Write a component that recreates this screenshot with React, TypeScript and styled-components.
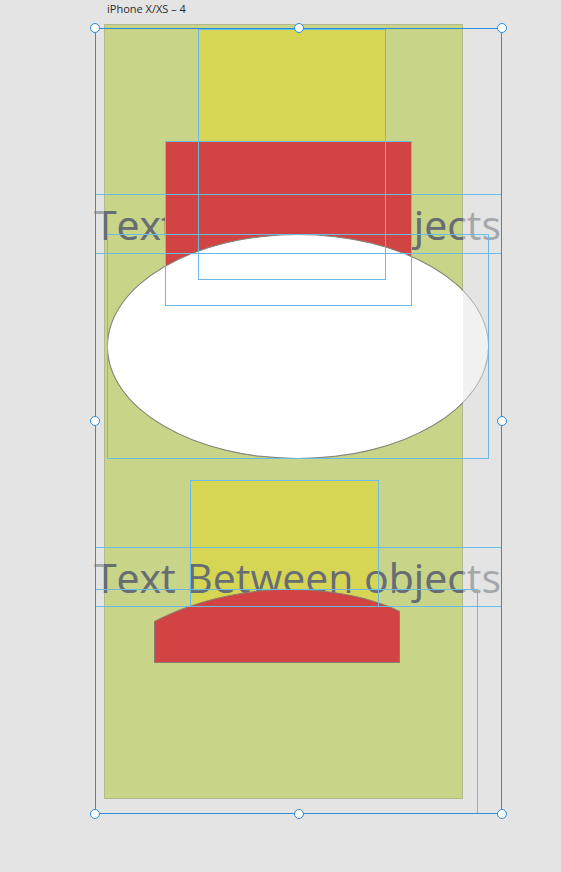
import React, { FC } from 'react';
import styled, { createGlobalStyle } from 'styled-components';

// design canvas: everything here sits at its own coordinates on the board
const ARTBOARD = { x: 104, y: 24, w: 359, h: 775 };

const GlobalStyle = createGlobalStyle`
  html, body {
    margin: 0;
    padding: 0;
    background: #e4e4e4;
  }
  body {
    font-family: 'Open Sans', 'Noto Sans', sans-serif;
  }
`;

const Canvas = styled.div`
  position: relative;
  width: 561px;
  height: 872px;
  overflow: hidden;
  background: #e4e4e4;
`;

const ArtboardTitle = styled.div`
  position: absolute;
  left: 107px;
  top: 1px;
  font-size: 11px;
  line-height: 16px;
  color: #2b2b2b;
`;

const Artboard = styled.div`
  position: absolute;
  left: ${ARTBOARD.x}px;
  top: ${ARTBOARD.y}px;
  width: ${ARTBOARD.w}px;
  height: ${ARTBOARD.h}px;
  box-sizing: border-box;
  background: #c8d487;
  border: 1px solid #b2b98e;
`;

const Layer = styled.div<{ $faded?: boolean }>`
  position: absolute;
  inset: 0;
  opacity: ${({ $faded }) => ($faded ? 0.5 : 1)};
  clip-path: ${({ $faded }) =>
    $faded
      ? 'none'
      : `inset(${ARTBOARD.y}px ${561 - ARTBOARD.x - ARTBOARD.w}px ${872 - ARTBOARD.y - ARTBOARD.h}px ${ARTBOARD.x}px)`};
`;

type Box = { $x: number; $y: number; $w: number; $h: number };

const Rect = styled.div<Box & { $fill: string }>`
  position: absolute;
  left: ${({ $x }) => $x}px;
  top: ${({ $y }) => $y}px;
  width: ${({ $w }) => $w}px;
  height: ${({ $h }) => $h}px;
  box-sizing: border-box;
  background: ${({ $fill }) => $fill};
  border: 1px solid #6c8e9c;
`;

const Oval = styled.div<Box>`
  position: absolute;
  left: ${({ $x }) => $x}px;
  top: ${({ $y }) => $y}px;
  width: ${({ $w }) => $w}px;
  height: ${({ $h }) => $h}px;
  box-sizing: border-box;
  border-radius: 50%;
  background: #ffffff;
  border: 1px solid #7e8478;
`;

const Label = styled.div<{ $x: number; $y: number }>`
  position: absolute;
  left: ${({ $x }) => $x}px;
  top: ${({ $y }) => $y}px;
  font-family: 'Open Sans', 'Noto Sans', sans-serif;
  font-size: 41px;
  line-height: 59px;
  color: #686d74;
  white-space: nowrap;
`;

const ArchSvg = styled.svg`
  position: absolute;
  left: 0;
  top: 0;
  width: 561px;
  height: 872px;
`;

const Guide = styled.div<Box>`
  position: absolute;
  left: ${({ $x }) => $x}px;
  top: ${({ $y }) => $y}px;
  width: ${({ $w }) => $w}px;
  height: ${({ $h }) => $h}px;
  box-sizing: border-box;
  border: 1px solid #6cbbe6;
  pointer-events: none;
`;

const Selection = styled.div`
  position: absolute;
  left: 95px;
  top: 28px;
  width: 407px;
  height: 786px;
  box-sizing: border-box;
  border: 1px solid #2a8cdb;
`;

const HandleGrid = styled.div`
  position: absolute;
  inset: -6px;
  display: grid;
  grid-template-columns: 10px 1fr 10px;
  grid-template-rows: 10px 1fr 10px;
  grid-template-areas:
    'tl tc tr'
    'ml .  mr'
    'bl bc br';
  align-items: center;
  justify-items: center;
`;

const Handle = styled.div<{ $area: string }>`
  grid-area: ${({ $area }) => $area};
  width: 10px;
  height: 10px;
  box-sizing: border-box;
  border-radius: 50%;
  background: #ffffff;
  border: 1px solid #2a8cdb;
`;

const handleAreas = ['tl', 'tc', 'tr', 'ml', 'mr', 'bl', 'bc', 'br'];

const Content: FC = () => (
  <>
    <Label $x={94} $y={195}>Text Between objects</Label>
    <Rect $x={198} $y={29} $w={188} $h={251} $fill="#d6d654" />
    <Rect $x={165} $y={141} $w={247} $h={165} $fill="#d24343" />
    <Oval $x={107} $y={234} $w={382} $h={225} />
    <Rect $x={190} $y={480} $w={189} $h={127} $fill="#d6d654" />
    <Label $x={94} $y={548}>Text Between objects</Label>
    <ArchSvg viewBox="0 0 561 872">
      <path
        d="M154.5 621.5 C 190 603, 235 591, 282 589.5 C 330 589, 370 597, 399.5 611.5 L399.5 662.5 L154.5 662.5 Z"
        fill="#d24343"
        stroke="#8c7a6c"
        strokeWidth="1"
      />
    </ArchSvg>
  </>
);

export default function App() {
  return (
    <>
      <GlobalStyle />
      <Canvas>
        <ArtboardTitle>iPhone X/XS – 4</ArtboardTitle>
        <Artboard />
        <Layer $faded>
          <Content />
        </Layer>
        <Layer>
          <Content />
        </Layer>

        <Guide $x={198} $y={29} $w={188} $h={251} />
        <Guide $x={165} $y={141} $w={247} $h={165} />
        <Guide $x={95} $y={194} $w={407} $h={60} />
        <Guide $x={107} $y={234} $w={382} $h={225} />
        <Guide $x={190} $y={480} $w={189} $h={127} />
        <Guide $x={95} $y={547} $w={407} $h={60} />
        <Guide $x={95} $y={589} $w={383} $h={225} />

        <Selection>
          <HandleGrid>
            {handleAreas.map((area) => (
              <Handle key={area} $area={area} />
            ))}
          </HandleGrid>
        </Selection>
      </Canvas>
    </>
  );
}
